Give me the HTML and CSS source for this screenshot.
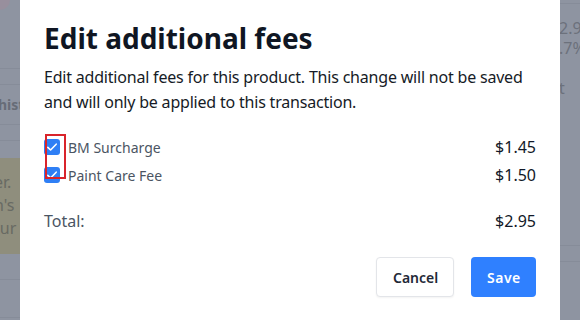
FILE: index.html
```html
<!DOCTYPE html>
<html>
<head>
<meta charset="utf-8">
<link rel="stylesheet" href="styles.css">
</head>
<body>
<div class="page">
  <div class="side side-left">
    <div class="avatar"></div>
    <div class="row r1"></div>
    <div class="row r2"></div>
    <div class="row r3"><span class="bold">hist</span></div>
    <div class="row r4"></div>
    <div class="notice">
      <div>er.</div>
      <div>n's</div>
      <div>tur</div>
    </div>
    <div class="row r5"></div>
    <div class="row r6"></div>
  </div>
  <div class="middle"></div>
  <div class="side side-right">
    <div class="rrow rr0"></div>
    <div class="rtext">2.9</div>
    <div class="rtext">.7%</div>
    <div class="rtext rt">t</div>
    <div class="rrow rr1"></div>
    <div class="rrow rr2"></div>
  </div>
</div>

<div class="modal">
  <h1 class="title">Edit additional fees</h1>
  <p class="desc">Edit additional fees for this product. This change will not be saved and will only be applied to this transaction.</p>
  <div class="fees">
    <div class="fee">
      <label class="fee-label"><span class="check"><svg viewBox="0 0 16 16" width="16" height="16"><path d="M3.8 8.4 L6.6 11 L12.2 5.2" fill="none" stroke="#fff" stroke-width="1.6" stroke-linecap="round" stroke-linejoin="round"/></svg></span>BM Surcharge</label>
      <span class="amount">$1.45</span>
    </div>
    <div class="fee">
      <label class="fee-label"><span class="check"><svg viewBox="0 0 16 16" width="16" height="16"><path d="M3.8 8.4 L6.6 11 L12.2 5.2" fill="none" stroke="#fff" stroke-width="1.6" stroke-linecap="round" stroke-linejoin="round"/></svg></span>Paint Care Fee</label>
      <span class="amount">$1.50</span>
    </div>
    <div class="highlight"></div>
  </div>
  <div class="total">
    <span class="total-label">Total:</span>
    <span class="amount">$2.95</span>
  </div>
  <div class="actions">
    <button class="btn btn-cancel">Cancel</button>
    <button class="btn btn-save">Save</button>
  </div>
</div>
</body>
</html>
```

FILE: styles.css
```css
* { box-sizing: border-box; }
html, body { margin: 0; padding: 0; }
body {
  width: 580px;
  height: 320px;
  overflow: hidden;
  background: #8e94a1;
  font-family: "Noto Sans", "Open Sans", sans-serif;
  position: relative;
}
.page {
  display: flex;
  height: 320px;
}
.side { width: 20px; overflow: hidden; position: relative; }
.middle { flex: 1; }
.side-left { display: flex; flex-direction: column; }
.avatar {
  position: absolute;
  left: -10px; top: -10px;
  width: 20px; height: 20px;
  border-radius: 50%;
  background: #988f9d;
}
.row { border-bottom: 1px solid #868c99; flex: none; }
.r1 { height: 69px; }
.r2 { height: 16px; }
.r3 { height: 40px; font-size: 14px; color: #676c77; line-height: 40px; white-space: nowrap; }
.r3 .bold { font-weight: 700; margin-left: -2px; }
.r4 { height: 16px; }
.notice {
  margin-top: 17px;
  height: 96px;
  background: #8f8e7d;
  color: #686a63;
  font-size: 16px;
  line-height: 23px;
  padding-top: 13px;
  white-space: nowrap;
  margin-left: -6px;
}
.r5 { height: 26px; }
.r6 { height: 38px; }
.side-right { display: flex; flex-direction: column; }
.rrow { border-bottom: 1px solid #868c99; flex: none; }
.rr0 { height: 4px; }
.rtext { font-size: 16px; color: #6c717c; line-height: 20px; white-space: nowrap; margin-left: -1px; }
.rtext:nth-child(2) { margin-top: 14px; }
.rt { margin-top: 20px; }
.rr1 { height: 148px; }
.rr2 { height: 16px; }

.modal {
  position: absolute;
  left: 20px;
  top: -20px;
  width: 540px;
  height: 400px;
  background: #fff;
  border-radius: 8px;
  padding: 40px 24px 24px;
  color: #111827;
}
.title {
  margin: 0;
  font-size: 28px;
  line-height: 36px;
  font-weight: 700;
  color: #0f1623;
}
.desc {
  margin: 9px 0 0;
  font-size: 16px;
  line-height: 25px;
  color: #161b26;
  letter-spacing: -0.2px;
}
.fees {
  margin-top: 21px;
  display: flex;
  flex-direction: column;
  gap: 6px;
  position: relative;
}
.fee {
  display: flex;
  justify-content: space-between;
  align-items: center;
  height: 22px;
}
.fee-label {
  display: flex;
  align-items: center;
  gap: 8px;
  font-size: 14px;
  color: #4b5563;
}
.check {
  width: 16px; height: 16px;
  border-radius: 3px;
  background: #2f7ff5;
  display: flex;
}
.amount {
  font-size: 16px;
  color: #111827;
}
.highlight {
  position: absolute;
  left: 1px; top: -2px;
  width: 21px; height: 45px;
  border: 2px solid #d9242b;
}
.total {
  margin-top: 23px;
  display: flex;
  justify-content: space-between;
  align-items: center;
  height: 24px;
}
.total-label { font-size: 16px; color: #4b5563; }
.actions {
  margin-top: 24px;
  display: flex;
  justify-content: flex-end;
  gap: 17px;
}
.btn {
  height: 40px;
  border-radius: 4px;
  font-family: inherit;
  font-size: 14px;
  font-weight: 600;
  padding: 0 16px;
  cursor: pointer;
}
.btn-cancel {
  width: 78px;
  background: #fff;
  border: 1px solid #e3e5e9;
  color: #1f2937;
  box-shadow: 0 1px 2px rgba(0,0,0,0.05);
}
.btn-save {
  width: 65px;
  background: #2f80ff;
  border: none;
  color: #fff;
  letter-spacing: 0.5px;
}
```
